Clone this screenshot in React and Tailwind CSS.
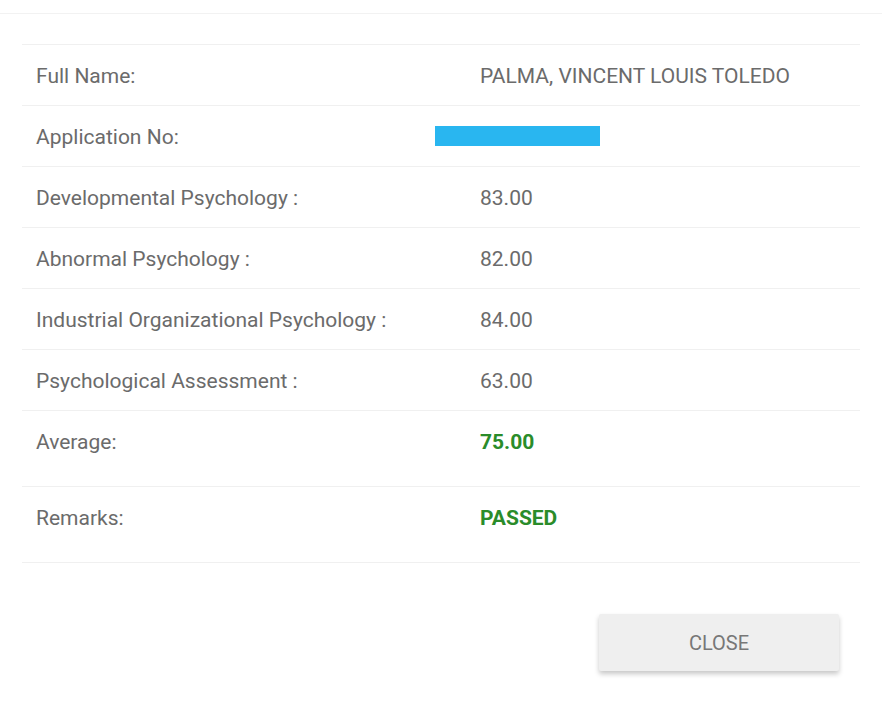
import React from 'react'

const rows = [
  { label: 'Full Name:', value: 'PALMA, VINCENT LOUIS TOLEDO' },
  { label: 'Application No:', value: null, redacted: true },
  { label: 'Developmental Psychology :', value: '83.00' },
  { label: 'Abnormal Psychology :', value: '82.00' },
  { label: 'Industrial Organizational Psychology :', value: '84.00' },
  { label: 'Psychological Assessment :', value: '63.00' },
  { label: 'Average:', value: '75.00', strong: true },
  { label: 'Remarks:', value: 'PASSED', strong: true },
]

export default function App() {
  return (
    <div
      className="min-h-[713px] w-full bg-white text-[#6b6b6b]"
      style={{ fontFamily: 'Roboto, "Liberation Sans", sans-serif' }}
    >
      <div className="h-[14px] border-b border-[#f2f2f2]" />
      <div className="px-[22px] pt-[30px]">
        <div className="border-t border-[#f0f0f0]">
          {rows.map((r) => (
            <div
              key={r.label}
              className={`border-b border-[#f0f0f0] ${r.strong ? 'pb-[15px]' : ''}`}
            >
              <div className="grid h-[60px] grid-cols-[444px_1fr] items-center pt-[3px] text-[21px]">
                <div className="pl-[14px]">{r.label}</div>
                <div className="pl-[14px]">
                  {r.redacted ? (
                    <div className="-ml-[45px] -mt-[3px] h-[20px] w-[165px] bg-[#29b6f0]" />
                  ) : (
                    <span className={r.strong ? 'font-bold text-[#2a8c2a]' : ''}>{r.value}</span>
                  )}
                </div>
              </div>
            </div>
          ))}
        </div>
      </div>
      <div className="mt-[51px] flex justify-end pr-[43px]">
        <button
          type="button"
          className="h-[57px] w-[240px] rounded-[2px] bg-[#efefef] text-[20px] text-[#777] shadow-[0_3px_5px_rgba(0,0,0,0.22)]"
        >
          CLOSE
        </button>
      </div>
    </div>
  )
}
